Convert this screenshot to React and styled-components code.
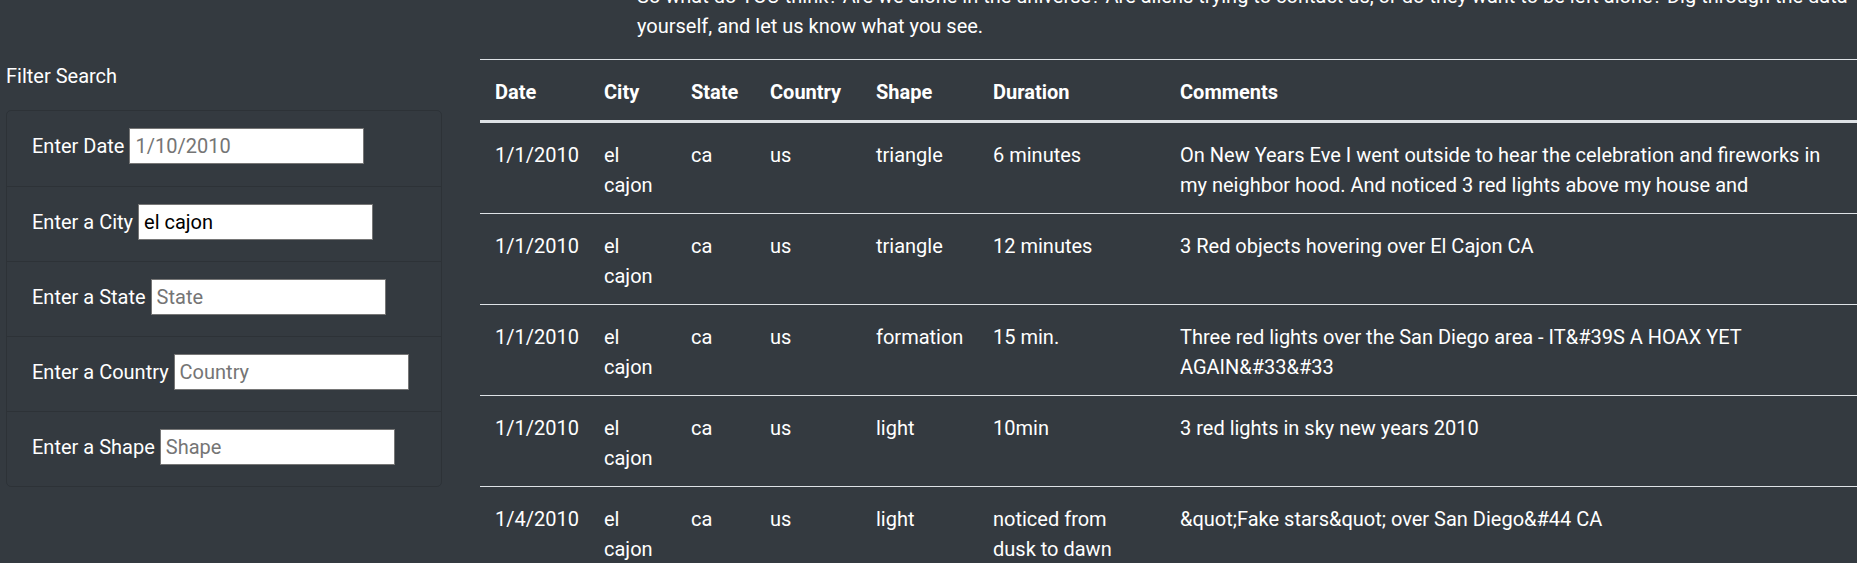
import React from "react";
import styled, { createGlobalStyle } from "styled-components";

const GlobalStyle = createGlobalStyle`
  html, body {
    margin: 0;
    padding: 0;
    background: #343a40;
    overflow: hidden;
  }
  body {
    color: #ffffff;
    font-family: Roboto, "Noto Sans", "Liberation Sans", sans-serif;
    font-size: 20px;
    line-height: 30px;
  }
  * { box-sizing: border-box; }
`;

const Page = styled.div`
  width: 1857px;
  height: 563px;
  overflow: hidden;
`;

const Scroller = styled.div`
  margin-top: -19px;
`;

const Intro = styled.p`
  margin: 0 0 18px 0;
  padding-left: 637px;
  white-space: nowrap;
`;

const Row = styled.div`
  display: grid;
  grid-template-columns: 480px 1fr;
  align-items: start;
`;

const Sidebar = styled.aside`
  padding-left: 6px;
`;

const SideTitle = styled.div`
  margin: 2px 0 19px 0;
  line-height: 30px;
`;

const Card = styled.ul`
  list-style: none;
  margin: 0;
  padding: 0;
  width: 436px;
  border: 1px solid rgba(0, 0, 0, 0.13);
  border-radius: 5px;
`;

const Item = styled.li`
  display: flex;
  align-items: center;
  height: 75px;
  padding: 0 25px 5px 25px;
  border-top: ${(p) => (p.$first ? "none" : "1px solid rgba(0, 0, 0, 0.13)")};
`;

const Label = styled.label`
  margin-right: 5px;
  white-space: nowrap;
`;

const Input = styled.input`
  width: 235px;
  height: 36px;
  padding: 1px 5px;
  border: 1px solid #767676;
  background: #ffffff;
  color: #000000;
  font-family: Roboto, "Noto Sans", "Liberation Sans", sans-serif;
  font-size: 20px;
  outline: none;
  &::placeholder {
    color: #757575;
  }
`;

const Table = styled.table`
  width: 1377px;
  border-collapse: collapse;
  table-layout: fixed;
`;

const Th = styled.th`
  padding: 17px 15px 13px 15px;
  text-align: left;
  font-weight: 700;
  vertical-align: bottom;
  border-top: 1px solid #dee2e6;
  border-bottom: 3px solid #dee2e6;
`;

const Td = styled.td`
  padding: 17px 15px 13px 15px;
  vertical-align: top;
  border-top: 1px solid #dee2e6;
`;

const columns = [
  { key: "date", label: "Date", width: 109 },
  { key: "city", label: "City", width: 87 },
  { key: "state", label: "State", width: 79 },
  { key: "country", label: "Country", width: 106 },
  { key: "shape", label: "Shape", width: 117 },
  { key: "duration", label: "Duration", width: 187 },
  { key: "comments", label: "Comments" },
];

const rows = [
  {
    date: "1/1/2010",
    city: "el cajon",
    state: "ca",
    country: "us",
    shape: "triangle",
    duration: "6 minutes",
    comments:
      "On New Years Eve I went outside to hear the celebration and fireworks in my neighbor hood. And noticed 3 red lights above my house and",
  },
  {
    date: "1/1/2010",
    city: "el cajon",
    state: "ca",
    country: "us",
    shape: "triangle",
    duration: "12 minutes",
    comments: "3 Red objects hovering over El Cajon CA",
  },
  {
    date: "1/1/2010",
    city: "el cajon",
    state: "ca",
    country: "us",
    shape: "formation",
    duration: "15 min.",
    comments:
      "Three red lights over the San Diego area - IT&#39S A HOAX YET AGAIN&#33&#33",
  },
  {
    date: "1/1/2010",
    city: "el cajon",
    state: "ca",
    country: "us",
    shape: "light",
    duration: "10min",
    comments: "3 red lights in sky new years 2010",
  },
  {
    date: "1/4/2010",
    city: "el cajon",
    state: "ca",
    country: "us",
    shape: "light",
    duration: "noticed from dusk to dawn",
    comments: "&quot;Fake stars&quot; over San Diego&#44 CA",
  },
];

const filters = [
  { label: "Enter Date", placeholder: "1/10/2010" },
  { label: "Enter a City", placeholder: "City", value: "el cajon" },
  { label: "Enter a State", placeholder: "State" },
  { label: "Enter a Country", placeholder: "Country" },
  { label: "Enter a Shape", placeholder: "Shape" },
];

export default function App() {
  return (
    <Page>
      <GlobalStyle />
      <Scroller>
        <Intro>
          So what do YOU think? Are we alone in the universe? Are aliens trying
          to contact us, or do they want to be left alone? Dig through the data
          <br />
          yourself, and let us know what you see.
        </Intro>
        <Row>
          <Sidebar>
            <SideTitle>Filter Search</SideTitle>
            <Card>
              {filters.map((f, i) => (
                <Item key={f.label} $first={i === 0}>
                  <Label>{f.label}</Label>
                  <Input
                    type="text"
                    placeholder={f.placeholder}
                    defaultValue={f.value}
                  />
                </Item>
              ))}
            </Card>
          </Sidebar>
          <Table>
            <colgroup>
              {columns.map((c) => (
                <col key={c.key} style={c.width ? { width: c.width } : undefined} />
              ))}
            </colgroup>
            <thead>
              <tr>
                {columns.map((c) => (
                  <Th key={c.key}>{c.label}</Th>
                ))}
              </tr>
            </thead>
            <tbody>
              {rows.map((r, i) => (
                <tr key={i}>
                  {columns.map((c) => (
                    <Td key={c.key}>{r[c.key]}</Td>
                  ))}
                </tr>
              ))}
            </tbody>
          </Table>
        </Row>
      </Scroller>
    </Page>
  );
}
